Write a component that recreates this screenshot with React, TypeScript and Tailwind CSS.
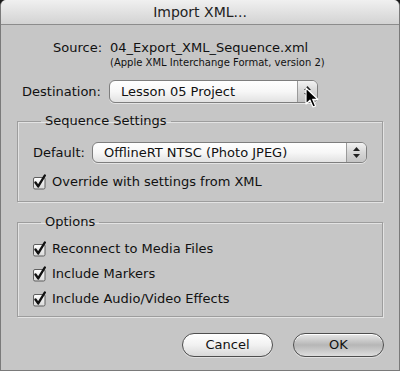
import React from "react";

function Check() {
  return (
    <svg width="16" height="16" viewBox="0 0 16 16" className="shrink-0">
      <defs>
        <linearGradient id="cb" x1="0" y1="0" x2="0" y2="1">
          <stop offset="0" stopColor="#ffffff" />
          <stop offset="1" stopColor="#d8d8d8" />
        </linearGradient>
      </defs>
      <rect x="0.5" y="3.5" width="11.5" height="11.5" rx="1.5" fill="url(#cb)" stroke="#5e5e5e" />
      <path d="M2.5 8.5 L5.2 12.4 L11.8 1.5" fill="none" stroke="#111" strokeWidth="2.4" strokeLinecap="round" strokeLinejoin="round" />
    </svg>
  );
}

function Stepper() {
  return (
    <div className="w-[20px] h-full flex flex-col items-center justify-center gap-[3px] border-l border-[#9a9a9a] bg-gradient-to-b from-[#f2f2f2] via-[#d6d6d6] to-[#c4c4c4] rounded-r-[5px]">
      <svg width="7" height="4" viewBox="0 0 7 4">
        <path d="M0 4 L3.5 0 L7 4 Z" fill="#222" />
      </svg>
      <svg width="7" height="4" viewBox="0 0 7 4">
        <path d="M0 0 L3.5 4 L7 0 Z" fill="#222" />
      </svg>
    </div>
  );
}

function Popup({ label, className }: { label: string; className: string }) {
  return (
    <div
      className={`flex items-stretch rounded-[6px] border border-[#7e7e7e] bg-gradient-to-b from-[#ffffff] via-[#f7f7f7] to-[#e2e2e2] shadow-[0_1px_0_#e4e4e4] ${className}`}
    >
      <div className="flex-1 flex items-center pl-[11px]">{label}</div>
      <Stepper />
    </div>
  );
}

function CheckRow({ text, className = "" }: { text: string; className?: string }) {
  return (
    <div className={`flex items-center h-[16px] gap-[3px] ${className}`}>
      <Check />
      <span>{text}</span>
    </div>
  );
}

function PillButton({ label, primary }: { label: string; primary?: boolean }) {
  return (
    <button
      className={`w-[91px] h-[24px] rounded-full border-[1.5px] border-[#4e4e4e] flex items-center justify-center text-[13px] text-[#111] shadow-[inset_0_1px_0_#fff,0_1px_0_#e0e0e0] ${
        primary
          ? "bg-gradient-to-b from-[#e8e8e8] via-[#b6b6b6] to-[#dedede]"
          : "bg-gradient-to-b from-[#ffffff] via-[#f1f1f1] to-[#d8d8d8]"
      }`}
    >
      {label}
    </button>
  );
}

export default function App() {
  return (
    <div className="w-[400px] h-[371px] bg-[#1a1a1a] font-['DejaVu_Sans',sans-serif] text-[13px] leading-[16px] text-[#111]">
      <div className="h-full flex flex-col bg-[#c6c6c6] rounded-t-[6px] overflow-hidden border-x border-b border-[#7a7a7a]">
        {/* title bar */}
        <div className="h-[25px] shrink-0 flex items-center justify-center border-b border-[#8c8c8c] bg-gradient-to-b from-[#f0f0f0] to-[#d3d3d3] text-[14px] text-[#222]">
          Import XML...
        </div>

        {/* source */}
        <div className="mt-[15px] pl-[52px] flex">
          <span className="w-[57px]">Source:</span>
          <span>04_Export_XML_Sequence.xml</span>
        </div>
        <div className="mt-[1px] pl-[109px] text-[10px] leading-[12px]">
          (Apple XML Interchange Format, version 2)
        </div>

        {/* destination */}
        <div className="mt-[11px] flex items-center">
          <span className="pl-[21px] w-[108px]">Destination:</span>
          <Popup label="Lesson 05 Project" className="w-[209px] h-[23px]" />
        </div>

        {/* sequence settings */}
        <fieldset className="mt-[10px] ml-[16px] w-[366px] border border-[#9d9d9d] shadow-[inset_1px_1px_0_#e3e3e3,1px_1px_0_#e3e3e3] pl-[15px] pb-[11px]">
          <legend className="ml-[8px] px-[4px] leading-[16px]">Sequence Settings</legend>
          <div className="mt-[13px] flex items-center">
            <span className="w-[59px]">Default:</span>
            <Popup label="OfflineRT NTSC (Photo JPEG)" className="w-[275px] h-[21px]" />
          </div>
          <CheckRow text="Override with settings from XML" className="mt-[11px]" />
        </fieldset>

        {/* options */}
        <fieldset className="mt-[12px] ml-[16px] w-[366px] border border-[#9d9d9d] shadow-[inset_1px_1px_0_#e3e3e3,1px_1px_0_#e3e3e3] pl-[15px] pb-[9px]">
          <legend className="ml-[8px] px-[4px] leading-[16px]">Options</legend>
          <div className="mt-[11px] flex flex-col gap-[9px]">
            <CheckRow text="Reconnect to Media Files" />
            <CheckRow text="Include Markers" />
            <CheckRow text="Include Audio/Video Effects" />
          </div>
        </fieldset>

        {/* buttons */}
        <div className="mt-[16px] pr-[15px] flex justify-end gap-[20px]">
          <PillButton label="Cancel" />
          <PillButton label="OK" primary />
        </div>
      </div>

      {/* mouse pointer over the destination popup */}
      <svg width="14" height="22" viewBox="0 0 14 22" className="absolute left-[305px] top-[87px]">
        <path d="M1 1 L1 17 L5 13.2 L8 20 L10.6 19 L7.7 12.3 L12.8 12.3 Z" fill="#000" stroke="#fff" strokeWidth="1.2" strokeLinejoin="round" />
      </svg>
    </div>
  );
}
